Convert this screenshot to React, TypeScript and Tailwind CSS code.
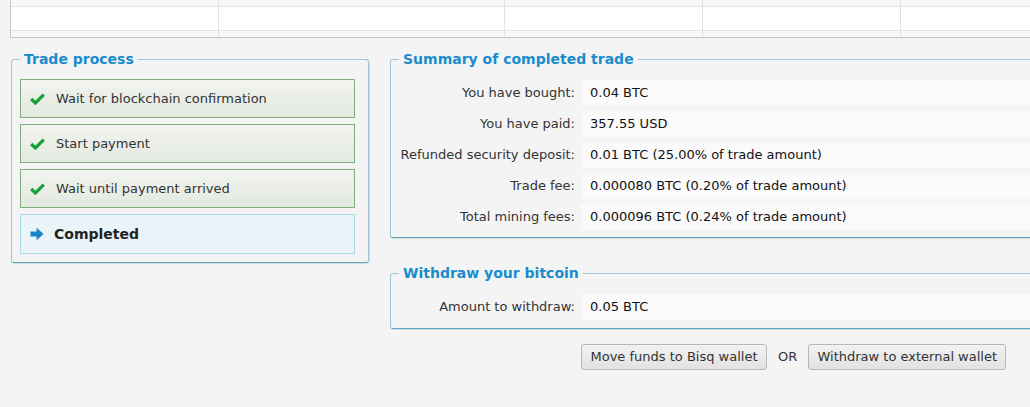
import React from "react";

const steps = [
  { label: "Wait for blockchain confirmation", done: true },
  { label: "Start payment", done: true },
  { label: "Wait until payment arrived", done: true },
  { label: "Completed", done: false },
];

const summary = [
  ["You have bought:", "0.04 BTC"],
  ["You have paid:", "357.55 USD"],
  ["Refunded security deposit:", "0.01 BTC (25.00% of trade amount)"],
  ["Trade fee:", "0.000080 BTC (0.20% of trade amount)"],
  ["Total mining fees:", "0.000096 BTC (0.24% of trade amount)"],
];

function Check() {
  return (
    <svg width="15" height="12" viewBox="0 0 15 12" className="shrink-0">
      <path d="M1.2 6 L5.4 10 L13.8 1.6" fill="none" stroke="#17a13a" strokeWidth="3.2" strokeLinejoin="miter" />
    </svg>
  );
}

function Arrow() {
  return (
    <svg width="14" height="14" viewBox="0 0 14 14" className="shrink-0">
      <path d="M0.5 4.6 H6.6 V0.8 L13.5 7 L6.6 13.2 V9.4 H0.5 Z" fill="#1584c6" />
    </svg>
  );
}

function Legend({ children }: { children: React.ReactNode }) {
  return (
    <legend className="px-[4px] text-[14px] leading-[20px] font-bold text-[#1a8ccd]">{children}</legend>
  );
}

export default function App() {
  return (
    <div className="w-[1030px] h-[407px] overflow-hidden bg-[#f4f4f4] text-[13px] text-[#333] font-['DejaVu_Sans','Verdana',sans-serif]">
      {/* table left over from above, scrolled */}
      <div className="ml-[10px] w-[1030px] border-l border-b border-[#c6c6c6]">
        <div className="grid grid-cols-[208px_286px_198px_198px_1fr]">
          {[0, 1, 2, 3, 4].map((i) => (
            <div key={i} className="border-r border-[#e2e2e2]">
              <div className="h-[7px] bg-[#f8f8f8] border-b border-[#e4e4e4]" />
              <div className="h-[24px] bg-white border-b border-[#e4e4e4]" />
              <div className="h-[6px] bg-[#f8f8f8]" />
            </div>
          ))}
        </div>
      </div>

      <div className="flex mt-[11px]">
        {/* Trade process */}
        <fieldset className="shrink-0 ml-[11px] w-[358px] h-[214px] border border-[#9fc6d6] border-b-[#5aa8c7] rounded-[3px] pl-[8px] pr-[13px] pt-[10px] shadow-[1px_1px_0_#dcdcdc]">
          <Legend>Trade process</Legend>
          <div className="flex flex-col gap-[6px]">
            {steps.map((s) =>
              s.done ? (
                <div
                  key={s.label}
                  className="h-[39px] flex items-center gap-[11px] pl-[9px] border border-[#7daf7c] bg-gradient-to-b from-[#f2f4f0] to-[#e3e9df] text-[#333]"
                >
                  <Check />
                  <span>{s.label}</span>
                </div>
              ) : (
                <div
                  key={s.label}
                  className="h-[40px] flex items-center gap-[10px] pl-[9px] border border-[#a9dbea] bg-[#eaf4f8] font-bold text-[14px] text-[#222]"
                >
                  <Arrow />
                  <span>{s.label}</span>
                </div>
              )
            )}
          </div>
        </fieldset>

        <div className="ml-[21px] w-[660px] shrink-0">
          {/* Summary */}
          <fieldset className="border border-[#9fc6d6] border-b-[#5aa8c7] rounded-[3px] pl-[8px] pt-[11px] pb-[7px] shadow-[1px_1px_0_#dcdcdc]">
            <Legend>Summary of completed trade</Legend>
            <div className="grid grid-cols-[176px_1fr] gap-x-[6px] gap-y-[5px]">
              {summary.map(([k, v]) => (
                <React.Fragment key={k}>
                  <div className="h-[26px] flex items-center justify-end whitespace-nowrap">{k}</div>
                  <div className="h-[26px] flex items-center pl-[9px] bg-[#fafafa] rounded-l-[3px] text-[#111] whitespace-nowrap">{v}</div>
                </React.Fragment>
              ))}
            </div>
          </fieldset>

          {/* Withdraw */}
          <fieldset className="mt-[25px] border border-[#9fc6d6] border-b-[#5aa8c7] rounded-[3px] pl-[8px] pt-[11px] pb-[8px] shadow-[1px_1px_0_#dcdcdc]">
            <Legend>Withdraw your bitcoin</Legend>
            <div className="grid grid-cols-[176px_1fr] gap-x-[6px]">
              <div className="h-[26px] flex items-center justify-end whitespace-nowrap">Amount to withdraw:</div>
              <div className="h-[26px] flex items-center pl-[9px] bg-[#fafafa] rounded-l-[3px] text-[#111]">0.05 BTC</div>
            </div>
          </fieldset>

          <div className="mt-[15px] ml-[191px] flex items-center">
            <button className="h-[26px] w-[186px] px-[8px] rounded-[3px] border border-[#b7b7b7] bg-gradient-to-b from-[#f2f2f2] to-[#e2e2e2] text-[#333] whitespace-nowrap">
              Move funds to Bisq wallet
            </button>
            <span className="mx-[11px] text-[#333]">OR</span>
            <button className="h-[26px] w-[198px] px-[8px] rounded-[3px] border border-[#b7b7b7] bg-gradient-to-b from-[#f2f2f2] to-[#e2e2e2] text-[#333] whitespace-nowrap">
              Withdraw to external wallet
            </button>
          </div>
        </div>
      </div>
    </div>
  );
}
